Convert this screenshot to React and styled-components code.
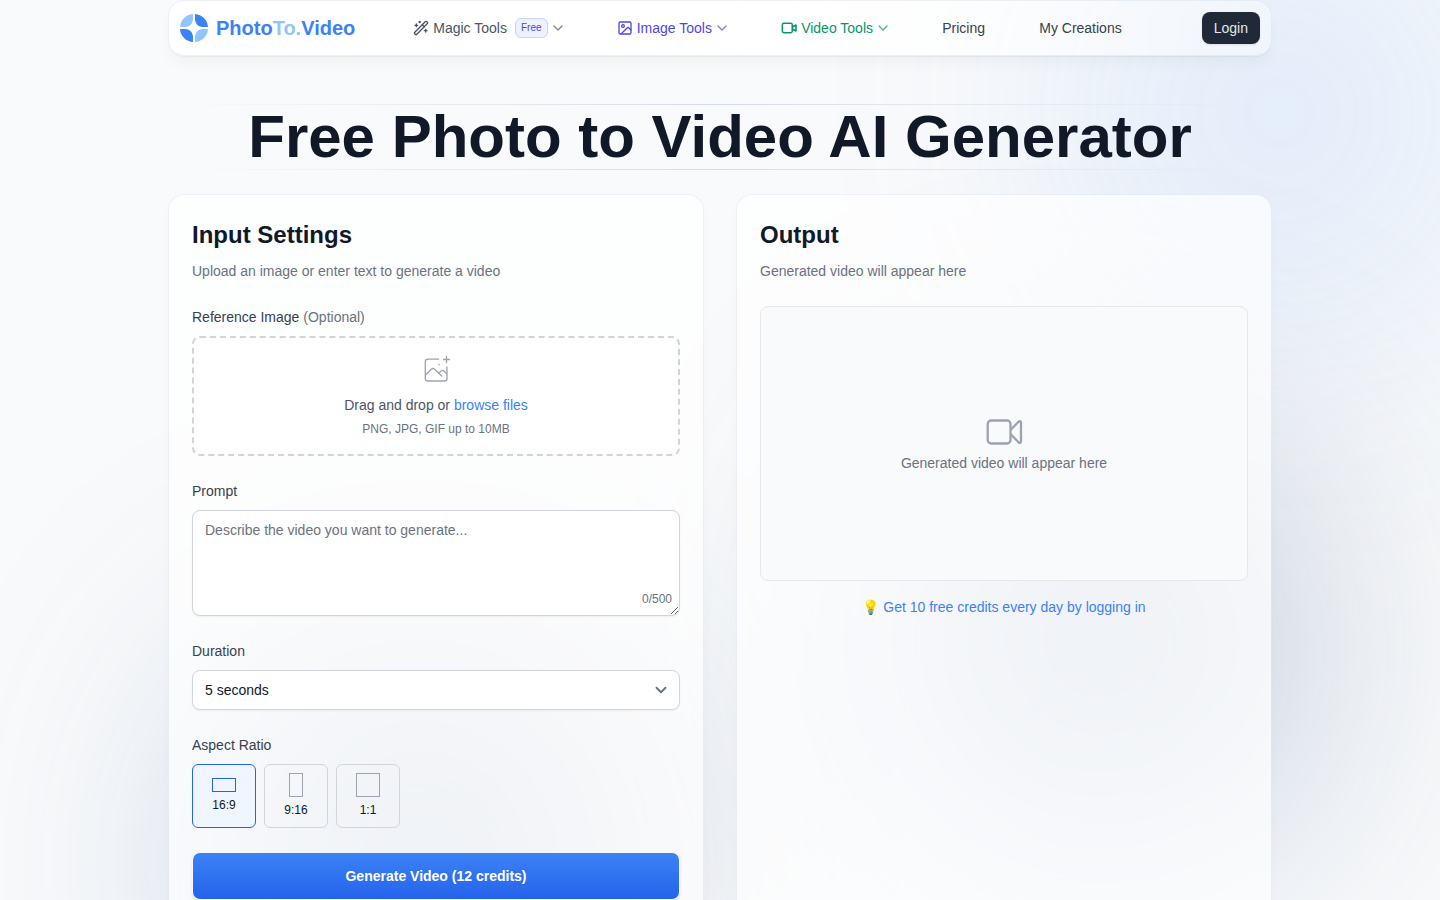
import React, { useState } from 'react';
import styled, { createGlobalStyle } from 'styled-components';
import { ChevronDown, Image as ImageIcon, Video, WandSparkles } from 'lucide-react';

const RATIOS = [
    { label: '16:9', w: 24, h: 14 },
    { label: '9:16', w: 14, h: 24 },
    { label: '1:1', w: 24, h: 24 },
];

const App = () => {
  const [prompt, setPrompt] = useState('');
  const [ratio, setRatio] = useState('16:9');

  return (
    <Page>
        <GlobalStyle />
        <Glow $x={580} $y={-68} $to="transparent" />
        <Glow $x={380} $y={480} $to="#111827" />
        <Glow $x={-300} $y={700} $to="#111827" />
        <Container>
            <Header>
                <Brand href="#">
                    <Logo />
                    <span>Photo<i>To.</i>Video</span>
                </Brand>
                <Nav>
                    <NavButton type="button" $color="#4b5563">
                        <WandSparkles size={16} />
                        Magic Tools
                        <Badge>Free</Badge>
                        <ChevronDown className="chevron" size={16} />
                    </NavButton>
                    <NavButton type="button" $color="#4f46e5">
                        <ImageIcon size={16} />
                        Image Tools
                        <ChevronDown className="chevron" size={16} />
                    </NavButton>
                    <NavButton type="button" $color="#059669">
                        <VideoIcon />
                        Video Tools
                        <ChevronDown className="chevron" size={16} />
                    </NavButton>
                    <NavLink href="#">Pricing</NavLink>
                    <NavLink href="#">My Creations</NavLink>
                </Nav>
                <Login type="button">Login</Login>
            </Header>

            <Title>Free Photo to Video AI Generator</Title>

            <Panels>
                <Card>
                    <h2>Input Settings</h2>
                    <Muted>Upload an image or enter text to generate a video</Muted>
                    <Form onSubmit={(e) => e.preventDefault()}>
                        <Field>
                            <Label htmlFor="file">Reference Image <span>(Optional)</span></Label>
                            <DropZone htmlFor="file">
                                <ImageAdd />
                                <p>Drag and drop or <b>browse files</b></p>
                                <small>PNG, JPG, GIF up to 10MB</small>
                                <input id="file" type="file" accept="image/*" />
                            </DropZone>
                        </Field>
                        <Field>
                            <Label htmlFor="prompt">Prompt</Label>
                            <PromptBox>
                                <textarea
                                    id="prompt"
                                    maxLength={500}
                                    placeholder="Describe the video you want to generate..."
                                    value={prompt}
                                    onChange={(e) => setPrompt(e.target.value)}
                                />
                                <Counter>{prompt.length}/500</Counter>
                            </PromptBox>
                        </Field>
                        <Field>
                            <Label htmlFor="duration">Duration</Label>
                            <SelectBox>
                                <select id="duration" defaultValue="5">
                                    <option value="5">5 seconds</option>
                                    <option value="10">10 seconds</option>
                                </select>
                                <ChevronDown size={18} strokeWidth={2.5} />
                            </SelectBox>
                        </Field>
                        <Field>
                            <Label as="div" id="ratio">Aspect Ratio</Label>
                            <Ratios role="group" aria-labelledby="ratio">
                                {RATIOS.map((r) => (
                                    <Ratio
                                        key={r.label}
                                        type="button"
                                        $active={ratio === r.label}
                                        aria-pressed={ratio === r.label}
                                        onClick={() => setRatio(r.label)}
                                    >
                                        <Shape $w={r.w} $h={r.h} />
                                        {r.label}
                                    </Ratio>
                                ))}
                            </Ratios>
                        </Field>
                        <Generate type="submit">Generate Video (12 credits)</Generate>
                    </Form>
                </Card>

                <Card>
                    <h2>Output</h2>
                    <Muted>Generated video will appear here</Muted>
                    <Preview>
                        <VideoOutline />
                        <p>Generated video will appear here</p>
                    </Preview>
                    <Credits href="#">💡 Get 10 free credits every day by logging in</Credits>
                </Card>
            </Panels>
        </Container>
    </Page>
  );
};

const Logo = () => (
    <svg width="28" height="28" viewBox="0 0 28 28" aria-hidden="true">
        <path fill="#93c5fd" d="M13 0v6Q12 12 6 13H0A14 14 0 0 1 13 0Z" />
        <path fill="#3b82f6" d="M15 0v6Q16 12 22 13h6A14 14 0 0 0 15 0Z" />
        <path fill="#3b82f6" d="M13 28v-6Q12 16 6 15H0A14 14 0 0 0 13 28Z" />
        <path fill="#93c5fd" d="M15 28v-6Q16 16 22 15h6A14 14 0 0 1 15 28Z" />
    </svg>
);

const VideoIcon = () => (
    <svg width="16" height="16" viewBox="0 0 24 24" fill="none" stroke="currentColor" strokeWidth="2.3" strokeLinecap="round" strokeLinejoin="round" aria-hidden="true">
        <rect x="2" y="5" width="15" height="14" rx="2.5" />
        <path d="m17 10.500 5.500-3v9l-5.500-3" />
    </svg>
);

const VideoOutline = () => (
    <svg width="40" height="40" viewBox="0 0 40 40" fill="none" stroke="#9ca3af" strokeWidth="2.3" strokeLinejoin="round" aria-hidden="true">
        <rect x="3.700" y="8.500" width="22.800" height="23" rx="3.500" />
        <path d="M26.500 18 34.500 9.800Q37 8 37 11v18q0 3-2.500 1.200L26.500 22" />
    </svg>
);

const ImageAdd = () => (
    <svg width="32" height="32" viewBox="0 0 32 32" fill="none" stroke="#9ca3af" strokeWidth="1.3" strokeLinecap="round" aria-hidden="true">
        <path d="M18.500 5.200H8q-2.700 0-2.700 2.500v16.800q0 2.500 2.700 2.500h16.500q2.500 0 2.500-2.500V13" />
        <path d="m5.500 21 5.800-5.700q1.700-1.600 3.400 0l7 6.700" />
        <path d="m19 19 1.800-1.800q1.700-1.700 3.400 0l2.500 2.500" />
        <path d="M26.500 2.500v6M23.500 5.500h6M19 10.500h.1" />
    </svg>
);

const GlobalStyle = createGlobalStyle`
    *{
        box-sizing: border-box;
    }
    body{
        margin: 0;
        background: #f9fafb;
        color: #111827;
        font-family: "Liberation Sans", Arial, sans-serif;
        font-size: 14px;
        line-height: 22px;
        -webkit-font-smoothing: antialiased;
    }
    h1, h2, p{
        margin: 0;
    }
    a{
        text-decoration: none;
    }
    button, select, textarea{
        font: inherit;
        color: inherit;
    }
    button{
        cursor: pointer;
    }
`;

const Page = styled.div`
    position: relative;
    overflow: hidden;
    min-height: 100vh;
`;

const Glow = styled.div`
    position: absolute;
    top: ${(p) => p.$y}px;
    left: calc(50% + ${(p) => p.$x}px);
    width: 320px;
    height: 320px;
    margin-left: -160px;
    border-radius: 50%;
    background: linear-gradient(to top right, #3b82f6, ${(p) => p.$to});
    opacity: 0.5;
    filter: blur(160px);
    pointer-events: none;
`;

const Container = styled.div`
    position: relative;
    max-width: 1152px;
    margin: 0 auto;
    padding: 0 24px 48px;
`;

const Header = styled.header`
    display: flex;
    align-items: center;
    height: 56px;
    padding: 0 11px;
    border: 1px solid rgba(226, 232, 240, 0.5);
    border-radius: 16px;
    background: linear-gradient(to right, #fff 50%, rgba(255, 255, 255, 0.4)) padding-box;
    box-shadow: 0 10px 15px -3px rgba(0, 0, 0, 0.04), 0 1px 1px rgba(0, 0, 0, 0.04);
`;

const Brand = styled.a`
    display: flex;
    align-items: center;
    gap: 8px;
    color: #3b82f6;
    font-size: 20px;
    font-weight: 700;
    i{
        color: #93c5fd;
        font-style: normal;
    }
`;

const Nav = styled.nav`
    flex: 1;
    display: flex;
    align-items: center;
    justify-content: space-between;
    margin: 0 80px 0 58px;
`;

const NavButton = styled.button`
    display: flex;
    align-items: center;
    gap: 4px;
    padding: 0;
    border: 0;
    background: none;
    color: ${(p) => p.$color};
    .chevron{
        margin: 0 -3px 0 -2px;
        opacity: 0.7;
    }
`;

const Badge = styled.span`
    margin-left: 4px;
    padding: 0 5px;
    border: 1px solid #c7d2fe;
    border-radius: 6px;
    background: #eef2ff;
    color: #4f46e5;
    font-size: 10px;
    line-height: 18px;
`;

const NavLink = styled.a`
    color: #374151;
`;

const Login = styled.button`
    height: 32px;
    padding: 0 12px;
    border: 0;
    border-radius: 8px;
    background: #1f2937;
    color: #e5e7eb;
    box-shadow: 0 1px 2px rgba(0, 0, 0, 0.1);
`;

const Title = styled.h1`
    margin: 48px 0 24px;
    border-top: 1px solid;
    border-bottom: 1px solid;
    border-image: linear-gradient(to right, transparent, rgba(203, 213, 225, 0.8), transparent) 1;
    font-size: 60px;
    line-height: 64px;
    text-align: center;
`;

const Panels = styled.main`
    display: grid;
    grid-template-columns: 1fr 1fr;
    gap: 32px;
`;

const Card = styled.section`
    padding: 23px;
    border: 1px solid rgba(226, 232, 240, 0.5);
    border-radius: 16px;
    background: rgba(255, 255, 255, 0.7);
    background-clip: padding-box;
    box-shadow: 0 10px 15px -3px rgba(0, 0, 0, 0.03);
    h2{
        margin-bottom: 8px;
        font-size: 24px;
        line-height: 34px;
    }
`;

const Muted = styled.p`
    margin-bottom: 24px;
    color: #6b7280;
`;

const Form = styled.form`
    display: flex;
    flex-direction: column;
    gap: 24px;
`;

const Field = styled.div`
    display: flex;
    flex-direction: column;
    gap: 8px;
`;

const Label = styled.label`
    color: #374151;
    span{
        color: #6b7280;
    }
`;

const DropZone = styled.label`
    display: flex;
    flex-direction: column;
    align-items: center;
    padding: 16px;
    border: 2px dashed #d1d5db;
    border-radius: 8px;
    background: #fff;
    color: #4b5563;
    cursor: pointer;
    p{
        margin: 8px 0 4px;
    }
    b{
        color: #3b82f6;
        font-weight: 400;
    }
    small{
        color: #6b7280;
        font-size: 12px;
        line-height: 18px;
    }
    input{
        display: none;
    }
`;

const PromptBox = styled.div`
    position: relative;
    textarea{
        display: block;
        width: 100%;
        height: 106px;
        padding: 8px 12px;
        border: 1px solid #d1d5db;
        border-radius: 8px;
        background: #fff;
        box-shadow: 0 1px 2px rgba(0, 0, 0, 0.05);
    }
    textarea::placeholder{
        color: #6b7280;
    }
`;

const Counter = styled.span`
    position: absolute;
    right: 8px;
    bottom: 8px;
    color: #6b7280;
    font-size: 12px;
    line-height: 18px;
`;

const SelectBox = styled.div`
    display: grid;
    align-items: center;
    select, svg{
        grid-area: 1 / 1;
    }
    select{
        width: 100%;
        height: 40px;
        padding: 8px 12px;
        border: 1px solid #d1d5db;
        border-radius: 8px;
        background: #fff;
        box-shadow: 0 1px 2px rgba(0, 0, 0, 0.05);
        appearance: none;
    }
    svg{
        justify-self: end;
        margin-right: 10px;
        color: #6b7280;
        pointer-events: none;
    }
`;

const Ratios = styled.div`
    display: flex;
    gap: 8px;
`;

const Ratio = styled.button`
    display: flex;
    flex-direction: column;
    align-items: center;
    justify-content: center;
    gap: 4px;
    width: 64px;
    height: 64px;
    padding: 0;
    border: 1px solid ${(p) => (p.$active ? '#2563eb' : '#d1d5db')};
    border-radius: 6px;
    background: ${(p) => (p.$active ? '#eff6ff' : 'transparent')};
    color: #111827;
    font-size: 12px;
    line-height: 18px;
    span{
        border-color: ${(p) => (p.$active ? '#2563eb' : '#9ca3af')};
    }
`;

const Shape = styled.span`
    width: ${(p) => p.$w}px;
    height: ${(p) => p.$h}px;
    border: 1px solid;
`;

const Generate = styled.button`
    height: 48px;
    border: 1px solid transparent;
    border-radius: 8px;
    background: linear-gradient(to top, #2563eb, #3b82f6) padding-box;
    color: #fff;
    font-weight: 700;
    box-shadow: 0 1px 2px rgba(0, 0, 0, 0.1);
`;

const Preview = styled.div`
    display: flex;
    flex-direction: column;
    align-items: center;
    justify-content: center;
    aspect-ratio: 16 / 9;
    margin-bottom: 15px;
    border: 1px solid #e5e7eb;
    border-radius: 8px;
    background: #f9fafb;
    color: #6b7280;
`;

const Credits = styled.a`
    display: block;
    color: #3b82f6;
    text-align: center;
`;

export default App;
